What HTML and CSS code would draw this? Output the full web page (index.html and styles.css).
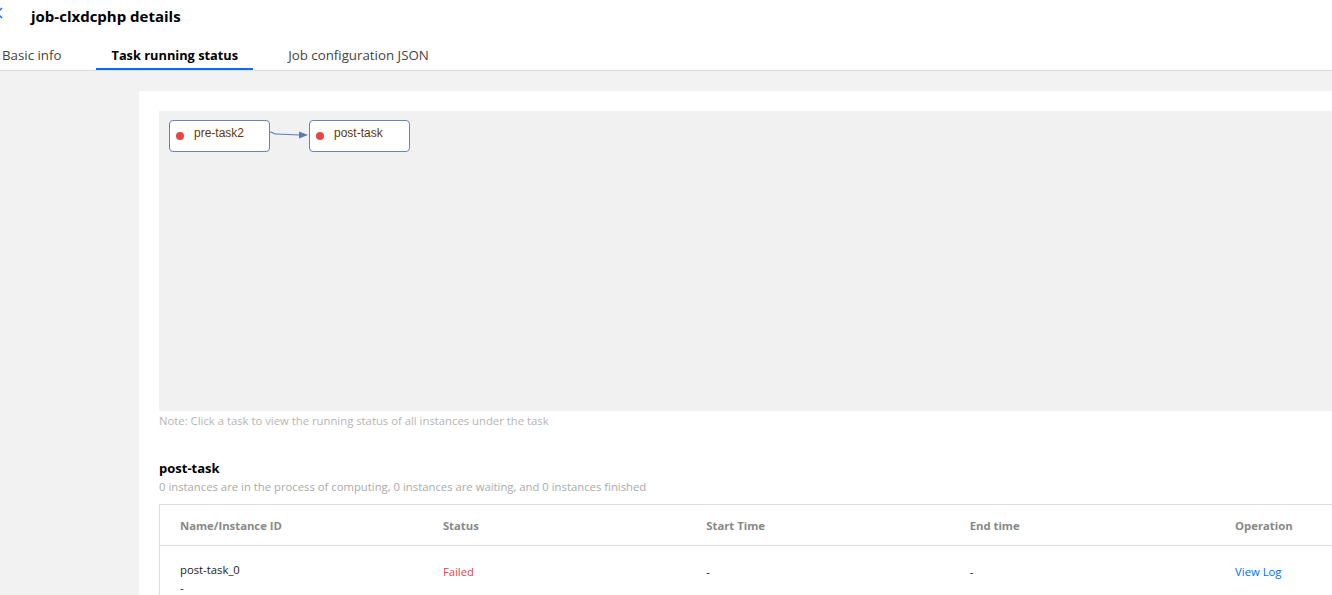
FILE: index.html
```html
<!DOCTYPE html>
<html lang="en">
<head>
  <meta charset="UTF-8">
  <title>job-clxdcphp details</title>
  <link rel="stylesheet" href="styles.css">
</head>
<body>
  <div class="page-head">
    <svg class="back" width="6" height="12" viewBox="0 0 6 12"><path d="M5 1 L0 6 L5 11" fill="none" stroke="#006eff" stroke-width="1.5"/></svg>
    <h1>job-clxdcphp details</h1>
  </div>

  <ul class="tabs">
    <li>Basic info</li>
    <li class="active">Task running status</li>
    <li>Job configuration JSON</li>
  </ul>

  <div class="content">
    <div class="card">
      <!-- task graph -->
      <div class="graph">
        <div class="node">
          <span class="dot"></span>
          <span class="label">pre-task2</span>
        </div>
        <svg class="edge" width="39" height="12" viewBox="0 0 39 12">
          <path d="M0 2 C3 2 3 4 6 4 L30 5" fill="none" stroke="#5b7bb5" stroke-width="1.2"/>
          <path d="M29 1.5 L38 5 L29 8.5 Z" fill="#5b7bb5"/>
        </svg>
        <div class="node">
          <span class="dot"></span>
          <span class="label">post-task</span>
        </div>
      </div>
      <p class="note">Note: Click a task to view the running status of all instances under the task</p>

      <h2 class="task-title">post-task</h2>
      <p class="task-sub">0 instances are in the process of computing, 0 instances are waiting, and 0 instances finished</p>

      <table class="instances">
        <colgroup>
          <col class="col">
          <col class="col">
          <col class="col">
          <col class="col-wide">
          <col class="col">
        </colgroup>
        <thead>
          <tr>
            <th>Name/Instance ID</th>
            <th>Status</th>
            <th>Start Time</th>
            <th>End time</th>
            <th>Operation</th>
          </tr>
        </thead>
        <tbody>
          <tr>
            <td>post-task_0<br><span class="sub-id">-</span></td>
            <td><span class="failed">Failed</span></td>
            <td>-</td>
            <td>-</td>
            <td><a href="#" class="link">View Log</a></td>
          </tr>
        </tbody>
      </table>
    </div>
  </div>
</body>
</html>
```

FILE: styles.css
```css
html, body { margin: 0; padding: 0; }
body {
  font-family: "Open Sans", "Liberation Sans", sans-serif;
  font-size: 11.3px;
  color: #000;
  background: #f2f2f2;
  overflow: hidden;
  width: 1332px;
  height: 595px;
}
.page-head {
  background: #fff;
  height: 32px;
  display: flex;
  align-items: center;
  position: relative;
}
.page-head .back { position: absolute; left: -3px; top: 7px; }
.page-head h1 {
  margin: 0 0 0 31px;
  font-size: 15px;
  font-weight: 700;
}
.tabs {
  list-style: none;
  margin: 0;
  padding: 0;
  background: #fff;
  height: 38px;
  display: flex;
  border-bottom: 1px solid #ddd;
}
.tabs li {
  padding: 11px 15px 0;
  margin-right: 20px;
  font-size: 13.3px;
  line-height: 24px;
  height: 25px;
  color: #444;
  border-bottom: 2px solid transparent;
  cursor: pointer;
  white-space: nowrap;
}
.tabs li:first-child { margin-left: -13px; }
.tabs li.active {
  color: #000;
  font-weight: 700;
  font-size: 12.8px;
  padding: 11px 15px 0 15px;
  border-bottom-color: #006eff;
}
.content { padding: 20px 0 0 139px; }
.card {
  background: #fff;
  width: 1360px;
  padding: 20px;
  box-sizing: border-box;
  min-height: 600px;
}
.graph {
  background: #f1f1f1;
  height: 300px;
  padding: 9px 10px;
  box-sizing: border-box;
  display: flex;
  align-items: flex-start;
}
.node {
  width: 101px;
  height: 32px;
  box-sizing: border-box;
  background: #fff;
  border: 1px solid #6b82b3;
  border-radius: 4px;
  display: flex;
  align-items: flex-start;
  font-family: "Liberation Sans", Arial, sans-serif;
  font-size: 12px;
  color: #5b3a0e;
}
.node .dot {
  width: 8px;
  height: 8px;
  border-radius: 50%;
  background: #e84545;
  margin: 11px 0 0 6px;
}
.node .label { margin: 5px 0 0 10px; }
.edge { margin-top: 10px; flex: none; }
.note {
  margin: 2px 0 0;
  color: #b5b5b5;
  line-height: 16px;
}
.task-title {
  margin: 30px 0 0;
  font-size: 13px;
  font-weight: 700;
  line-height: 18px;
}
.task-sub {
  margin: 2px 0 0;
  color: #aaa;
  line-height: 16px;
}
.instances {
  margin-top: 9px;
  width: 1320px;
  border-collapse: collapse;
  table-layout: fixed;
  border: 1px solid #ddd;
}
.instances .col { width: 263px; }
.instances .col-wide { width: 265px; }
.instances th {
  text-align: left;
  color: #888;
  font-weight: 700;
  padding: 0 20px;
  height: 40px;
  border-bottom: 1px solid #ddd;
}
.instances td {
  padding: 15px 20px 0;
  vertical-align: top;
  line-height: 18px;
  color: #222;
}
.instances td:not(:first-child) { padding-top: 17px; }
.sub-id { color: #222; }
.failed { color: #e54545; }
.link { color: #006eff; text-decoration: none; }
```
